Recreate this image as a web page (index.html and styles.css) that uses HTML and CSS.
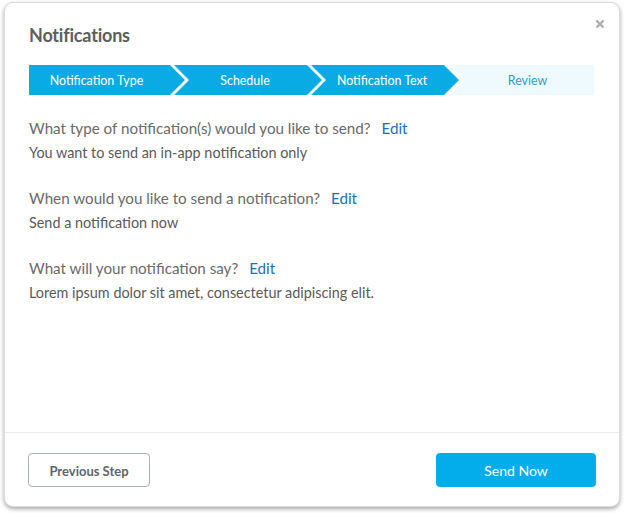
FILE: index.html
```html
<!DOCTYPE html>
<html>
<head>
<meta charset="utf-8">
<link rel="stylesheet" href="styles.css">
</head>
<body>
<div class="modal">
  <button class="close" aria-label="Close">
    <svg width="10" height="10" viewBox="0 0 10 10"><path d="M1.5 1.5 L8.5 8.5 M8.5 1.5 L1.5 8.5" stroke="#a9a9a9" stroke-width="2.2" stroke-linecap="butt"/></svg>
  </button>
  <div class="content">
    <h1 class="title">Notifications</h1>
    <div class="stepper">
      <div class="step step-first">Notification Type</div>
      <div class="step step-mid">Schedule</div>
      <div class="step step-mid">Notification Text</div>
      <div class="step step-last">Review</div>
    </div>
    <div class="summary">
      <div class="item">
        <div class="question">What type of notification(s) would you like to send? <a class="edit" href="#">Edit</a></div>
        <div class="answer">You want to send an in-app notification only</div>
      </div>
      <div class="item">
        <div class="question">When would you like to send a notification? <a class="edit" href="#">Edit</a></div>
        <div class="answer">Send a notification now</div>
      </div>
      <div class="item">
        <div class="question">What will your notification say? <a class="edit" href="#">Edit</a></div>
        <div class="answer">Lorem ipsum dolor sit amet, consectetur adipiscing elit.</div>
      </div>
    </div>
  </div>
  <div class="footer">
    <button class="btn btn-secondary">Previous Step</button>
    <button class="btn btn-primary">Send Now</button>
  </div>
</div>
</body>
</html>
```

FILE: styles.css
```css
* { box-sizing: border-box; }
html, body { margin: 0; padding: 0; background: #fff; }
body {
  font-family: Lato, "Open Sans", sans-serif;
  width: 625px;
  height: 513px;
  overflow: hidden;
}
.modal {
  position: relative;
  margin: 2px 5px 0 4px;
  height: 505px;
  background: #fff;
  border: 1px solid #dcdcdc;
  border-radius: 9px;
  box-shadow: 0 2px 4px rgba(0,0,0,0.35);
  display: flex;
  flex-direction: column;
}
.close {
  position: absolute;
  top: 16px;
  right: 14px;
  border: 0;
  background: none;
  padding: 0;
  width: 10px;
  height: 10px;
  display: flex;
}
.content {
  flex: 1;
  padding: 20px 25px 0 24px;
}
.title {
  margin: 0;
  font-size: 18px;
  line-height: 24px;
  font-weight: 700;
  color: #5e5e5e;
  letter-spacing: -0.2px;
}
.stepper {
  margin-top: 18px;
  display: flex;
  height: 30px;
}
.step {
  height: 30px;
  display: flex;
  align-items: center;
  justify-content: center;
  font-size: 12.4px;
  color: #fff;
  background: #0aabe5;
}
.step + .step { margin-left: -11px; }
.step-first {
  width: 156px;
  padding-right: 21px;
  clip-path: polygon(0 0, calc(100% - 15px) 0, 100% 50%, calc(100% - 15px) 100%, 0 100%);
}
.step-mid {
  width: 148px;
  padding-right: 6px;
  clip-path: polygon(0 0, calc(100% - 15px) 0, 100% 50%, calc(100% - 15px) 100%, 0 100%, 15px 50%);
}
.step-last {
  width: 146px;
  padding-left: 13px;
  background: #effafe;
  color: #2a9ad3;
  clip-path: polygon(0 0, 100% 0, 100% 100%, 0 100%, 15px 50%);
}
.summary {
  margin-top: 23px;
  display: flex;
  flex-direction: column;
  gap: 25px;
}
.item {
  display: flex;
  flex-direction: column;
  gap: 5px;
}
.question {
  font-size: 15.2px;
  line-height: 20px;
  color: #6a6a6a;
}
.edit {
  color: #1d70b0;
  text-decoration: none;
  margin-left: 7px;
}
.answer {
  font-size: 14.4px;
  line-height: 20px;
  color: #5a5a5a;
}
.footer {
  border-top: 1px solid #ececec;
  padding: 20px 23px 19px 23px;
  display: flex;
  justify-content: space-between;
  align-items: center;
}
.btn {
  font-family: Lato, "Open Sans", sans-serif;
  font-size: 13px;
  font-weight: 700;
  border-radius: 4px;
  height: 34px;
  padding-top: 2px;
  cursor: pointer;
}
.btn-secondary {
  width: 122px;
  background: #fff;
  border: 1px solid #a9b0b8;
  color: #5d6670;
}
.btn-primary {
  width: 160px;
  background: #03acea;
  border: 0;
  color: #fff;
  font-weight: 400;
  font-size: 14px;
}
```
